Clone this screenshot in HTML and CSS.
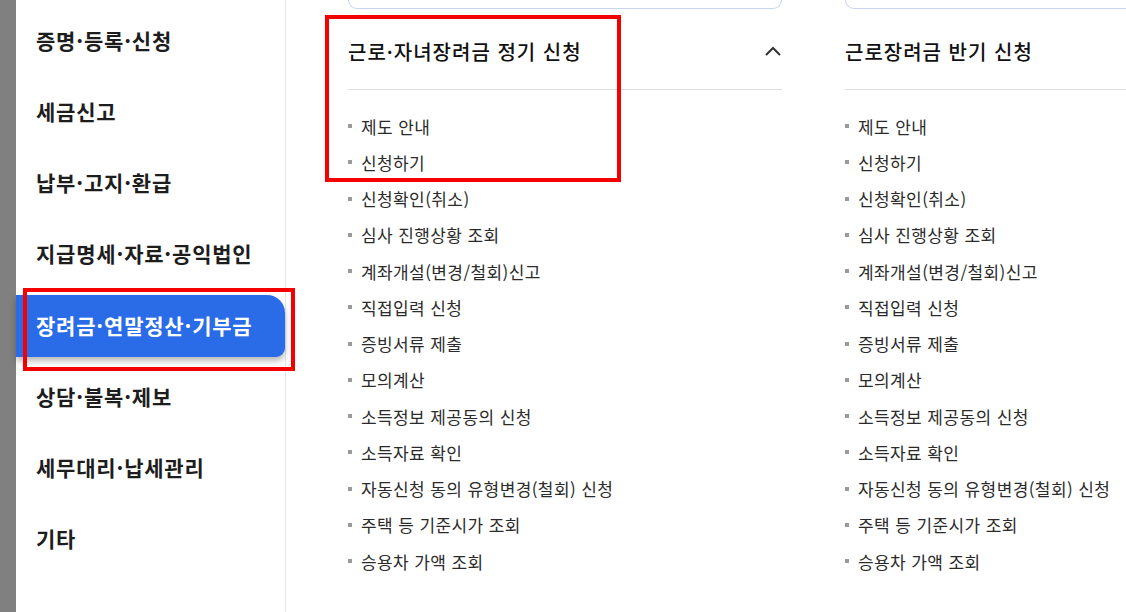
FILE: index.html
```html
<!DOCTYPE html>
<html lang="ko">
<head>
<meta charset="utf-8">
<link rel="stylesheet" href="styles.css">
</head>
<body>
<div class="page">
  <div class="strip"></div>
  <nav class="sidebar">
    <ul class="side-list">
      <li class="side-item">증명·등록·신청</li>
      <li class="side-item">세금신고</li>
      <li class="side-item">납부·고지·환급</li>
      <li class="side-item">지급명세·자료·공익법인</li>
      <li class="side-item active">장려금·연말정산·기부금</li>
      <li class="side-item">상담·불복·제보</li>
      <li class="side-item">세무대리·납세관리</li>
      <li class="side-item">기타</li>
    </ul>
  </nav>
  <main class="content">
    <section class="col">
      <div class="topbox"></div>
      <div class="col-head">
        <h2 class="col-title">근로·자녀장려금 정기 신청</h2>
        <svg class="chev" width="18" height="12" viewBox="0 0 18 12"><path d="M2 10 L9 3 L16 10" fill="none" stroke="#333" stroke-width="2"/></svg>
      </div>
      <ul class="links">
        <li>제도 안내</li>
        <li>신청하기</li>
        <li>신청확인(취소)</li>
        <li>심사 진행상황 조회</li>
        <li>계좌개설(변경/철회)신고</li>
        <li>직접입력 신청</li>
        <li>증빙서류 제출</li>
        <li>모의계산</li>
        <li>소득정보 제공동의 신청</li>
        <li>소득자료 확인</li>
        <li>자동신청 동의 유형변경(철회) 신청</li>
        <li>주택 등 기준시가 조회</li>
        <li>승용차 가액 조회</li>
      </ul>
    </section>
    <section class="col">
      <div class="topbox"></div>
      <div class="col-head">
        <h2 class="col-title">근로장려금 반기 신청</h2>
      </div>
      <ul class="links">
        <li>제도 안내</li>
        <li>신청하기</li>
        <li>신청확인(취소)</li>
        <li>심사 진행상황 조회</li>
        <li>계좌개설(변경/철회)신고</li>
        <li>직접입력 신청</li>
        <li>증빙서류 제출</li>
        <li>모의계산</li>
        <li>소득정보 제공동의 신청</li>
        <li>소득자료 확인</li>
        <li>자동신청 동의 유형변경(철회) 신청</li>
        <li>주택 등 기준시가 조회</li>
        <li>승용차 가액 조회</li>
      </ul>
    </section>
  </main>
  <div class="mark mark-menu"></div>
  <div class="mark mark-col"></div>
</div>
</body>
</html>
```
FILE: styles.css
```css
* { box-sizing: border-box; }
html, body { margin: 0; padding: 0; background: #fff; }
body {
  font-family: "Noto Sans CJK KR", "Noto Sans", sans-serif;
  width: 1126px;
  height: 612px;
  overflow: hidden;
}
.page {
  position: relative;
  display: flex;
  height: 612px;
  overflow: hidden;
}
.strip {
  flex: 0 0 16px;
  background: #808080;
}
.sidebar {
  flex: 0 0 270px;
  border-right: 1px solid #e4e4f4;
}
.side-list {
  list-style: none;
  margin: 0;
  padding: 10px 0 0 0;
}
.side-item {
  height: 62px;
  margin-bottom: 9.15px;
  display: flex;
  align-items: center;
  padding-left: 20px;
  padding-bottom: 2px;
  font-size: 21px;
  font-weight: 700;
  color: #1d1d1d;
  letter-spacing: 0.8px;
  white-space: nowrap;
}
.side-item.active {
  background: #2a6ce8;
  color: #fff;
  width: 269px;
  border-radius: 0 18px 9px 0;
  box-shadow: 0 4px 6px rgba(0, 0, 0, 0.28);
}
.content {
  flex: 1 1 auto;
  display: flex;
  gap: 63px;
  padding-left: 62px;
  overflow: hidden;
}
.col {
  flex: 0 0 434px;
}
.topbox {
  height: 9px;
  border: 1px solid #c9d5ee;
  border-top: none;
  border-radius: 0 0 11px 11px;
}
.col-head {
  height: 81px;
  padding-top: 4px;
  display: flex;
  align-items: center;
  justify-content: space-between;
  border-bottom: 1px solid #dedede;
}
.col-title {
  margin: 0;
  font-size: 20px;
  font-weight: 500;
  color: #111;
  letter-spacing: 1px;
  white-space: nowrap;
}
.links {
  list-style: none;
  margin: 0;
  padding: 18px 0 0 0;
}
.links li {
  height: 36.25px;
  display: flex;
  align-items: center;
  font-size: 17px;
  letter-spacing: 0.4px;
  color: #2b2b2b;
  white-space: nowrap;
}
.links li::before {
  content: "";
  width: 4px;
  height: 4px;
  background: #9a9a9a;
  margin-right: 9px;
  flex: 0 0 4px;
}
.mark {
  position: absolute;
  border: 4.5px solid #f40000;
  pointer-events: none;
}
.mark-menu {
  left: 23px;
  top: 288px;
  width: 272px;
  height: 83px;
}
.mark-col {
  left: 325px;
  top: 15px;
  width: 296px;
  height: 167px;
}
```
